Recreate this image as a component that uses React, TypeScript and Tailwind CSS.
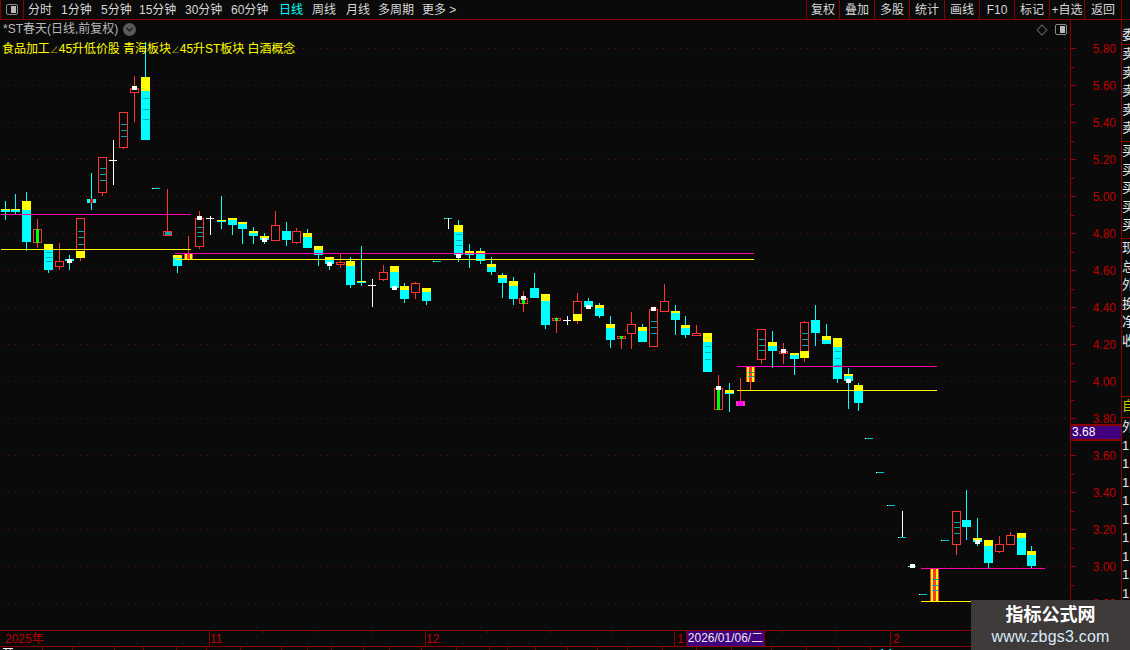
const FONT = "font-['Liberation_Sans','Noto_Sans_CJK_SC',sans-serif]";

type Candle = {
  x: number;
  k: "c" | "r" | "s";
  wt?: number;
  wb?: number;
  t: number;
  b: number;
  yt?: number; // yellow cap height on top
  yb?: number; // yellow foot height on bottom
  ticks?: number[];
  sq?: number; // white square top
  core?: string; // coloured centre bar
  coreT?: number;
};

const candles: Candle[] = [
  { x: 1, k: "c", wt: 201, wb: 220, t: 209, b: 212, yt: 1 },
  { x: 11, k: "c", wt: 194, wb: 214, t: 209, b: 212, yt: 1 },
  { x: 22, k: "c", wt: 192, wb: 251, t: 201, b: 242, yt: 9 },
  { x: 33, k: "r", wt: 219, wb: 248, t: 229, b: 243, core: "#00ff00" },
  { x: 44, k: "c", wb: 273, t: 244, b: 270, yt: 6, ticks: [252, 257, 261] },
  { x: 55, k: "r", wt: 243, wb: 270, t: 261, b: 267 },
  { x: 65, k: "c", wt: 255, wb: 270, t: 259, b: 261, sq: 259 },
  { x: 76, k: "r", wb: 261, t: 218, b: 258, yb: 7, ticks: [231, 237, 244] },
  { x: 87, k: "c", wt: 173, wb: 210, t: 199, b: 203, core: "#ff0000", coreT: 199 },
  { x: 98, k: "r", wb: 196, t: 157, b: 193, ticks: [168, 174, 180] },
  { x: 119, k: "r", wb: 149, t: 112, b: 148, ticks: [124, 130, 136] },
  { x: 130, k: "r", wt: 76, wb: 122, t: 88, b: 93, sq: 86 },
  { x: 141, k: "c", wt: 42, t: 77, b: 140, yt: 14, ticks: [98, 109, 119] },
  { x: 163, k: "r", wt: 189, t: 231, b: 236, ticks: [232, 233, 234] },
  { x: 173, k: "c", wb: 273, t: 255, b: 266, yt: 3 },
  { x: 184, k: "s", wt: 236, t: 254, b: 259 },
  { x: 195, k: "r", wt: 211, wb: 249, t: 218, b: 247, ticks: [227, 232, 236], sq: 216 },
  { x: 217, k: "c", wt: 196, wb: 229, t: 220, b: 222, yt: 1 },
  { x: 228, k: "c", wb: 235, t: 218, b: 225, yt: 2 },
  { x: 238, k: "c", wb: 244, t: 222, b: 229, yt: 2 },
  { x: 249, k: "c", wt: 227, wb: 244, t: 231, b: 236, yt: 2 },
  { x: 260, k: "c", wt: 233, wb: 244, t: 236, b: 240, yt: 2, sq: 238 },
  { x: 271, k: "r", wt: 211, t: 225, b: 241 },
  { x: 282, k: "c", wt: 222, wb: 246, t: 231, b: 240 },
  { x: 292, k: "r", wt: 228, wb: 244, t: 231, b: 243 },
  { x: 303, k: "c", wt: 229, t: 233, b: 248, yt: 4 },
  { x: 314, k: "c", wb: 266, t: 246, b: 255, yt: 4 },
  { x: 325, k: "c", wb: 270, t: 257, b: 264, yt: 3, sq: 262 },
  { x: 336, k: "r", wt: 254, wb: 268, t: 262, b: 265 },
  { x: 346, k: "c", wt: 257, wb: 288, t: 261, b: 285, yt: 5 },
  { x: 357, k: "c", wt: 246, wb: 286, t: 281, b: 283, yt: 1 },
  { x: 379, k: "r", wt: 265, wb: 281, t: 272, b: 280 },
  { x: 390, k: "c", t: 266, b: 288, yt: 6, sq: 286 },
  { x: 400, k: "c", wt: 283, wb: 303, t: 286, b: 299, yt: 4 },
  { x: 411, k: "r", wt: 282, wb: 299, t: 283, b: 293 },
  { x: 422, k: "c", wb: 305, t: 288, b: 301, yt: 4 },
  { x: 454, k: "c", wt: 220, wb: 262, t: 225, b: 255, yt: 7, ticks: [234, 240, 245], sq: 254 },
  { x: 465, k: "c", wt: 244, wb: 268, t: 251, b: 255, yt: 2 },
  { x: 476, k: "c", wt: 248, wb: 264, t: 251, b: 261, yt: 3 },
  { x: 487, k: "c", wt: 257, wb: 275, t: 264, b: 272, yt: 3 },
  { x: 498, k: "c", wt: 273, wb: 298, t: 275, b: 283, yt: 3 },
  { x: 509, k: "c", wt: 277, wb: 305, t: 281, b: 299, yt: 5 },
  { x: 519, k: "r", wt: 291, wb: 312, t: 298, b: 304, core: "#00ff00", coreT: 298, sq: 296 },
  { x: 530, k: "c", wt: 273, wb: 298, t: 288, b: 298 },
  { x: 541, k: "c", wb: 329, t: 294, b: 325, yt: 7 },
  { x: 552, k: "r", wt: 317, wb: 333, t: 318, b: 321, core: "#00ff00" },
  { x: 573, k: "r", wt: 293, wb: 324, t: 301, b: 321, yb: 7 },
  { x: 584, k: "c", wt: 298, wb: 309, t: 301, b: 307, sq: 305 },
  { x: 595, k: "c", wt: 303, wb: 318, t: 305, b: 316, yt: 3 },
  { x: 606, k: "c", wt: 316, wb: 348, t: 324, b: 340, yt: 4 },
  { x: 617, k: "r", wt: 336, wb: 349, t: 336, b: 339, core: "#00ff00" },
  { x: 627, k: "r", wt: 312, wb: 349, t: 324, b: 334 },
  { x: 638, k: "c", wt: 324, wb: 342, t: 327, b: 342, yt: 4 },
  { x: 649, k: "r", t: 309, b: 347, ticks: [321, 327, 333], sq: 307 },
  { x: 660, k: "r", wt: 284, t: 301, b: 312 },
  { x: 671, k: "c", wt: 305, wb: 335, t: 311, b: 320, yt: 2 },
  { x: 681, k: "c", wt: 316, wb: 338, t: 325, b: 335, yt: 3 },
  { x: 692, k: "r", wt: 325, t: 333, b: 336 },
  { x: 703, k: "c", t: 333, b: 372, yt: 9, ticks: [346, 352, 359] },
  { x: 714, k: "r", wt: 375, t: 388, b: 410, core: "#00ff00", sq: 386 },
  { x: 725, k: "c", wt: 383, wb: 412, t: 390, b: 394, yt: 3 },
  { x: 746, k: "s", wb: 390, t: 367, b: 382, ticks: [372, 376] },
  { x: 757, k: "r", wb: 364, t: 329, b: 360, ticks: [339, 345, 350] },
  { x: 768, k: "c", wt: 331, wb: 368, t: 342, b: 351, yt: 4 },
  { x: 779, k: "r", wt: 343, wb: 364, t: 351, b: 354, sq: 349 },
  { x: 790, k: "c", wb: 375, t: 353, b: 359, yt: 2 },
  { x: 800, k: "r", wt: 321, wb: 362, t: 322, b: 358, yb: 7, ticks: [333, 339, 345] },
  { x: 811, k: "c", wt: 305, wb: 346, t: 320, b: 333 },
  { x: 822, k: "c", wt: 324, wb: 344, t: 336, b: 344, yt: 4 },
  { x: 833, k: "c", wb: 383, t: 338, b: 379, yt: 9, ticks: [351, 358, 365] },
  { x: 844, k: "c", wt: 368, wb: 409, t: 374, b: 381, yt: 2, sq: 379 },
  { x: 854, k: "c", wt: 383, wb: 411, t: 385, b: 403, yt: 5 },
  { x: 930, k: "s", t: 569, b: 601, ticks: [579, 585, 590] },
  { x: 952, k: "r", wb: 555, t: 511, b: 545, ticks: [522, 527, 533] },
  { x: 962, k: "c", wt: 490, wb: 540, t: 520, b: 527 },
  { x: 973, k: "c", wt: 518, wb: 546, t: 538, b: 542, yt: 2, sq: 540 },
  { x: 984, k: "c", wb: 568, t: 540, b: 563, yt: 6 },
  { x: 995, k: "r", wt: 536, wb: 553, t: 544, b: 552 },
  { x: 1006, k: "r", wt: 532, t: 535, b: 545 },
  { x: 1017, k: "c", t: 533, b: 555, yt: 5 },
  { x: 1027, k: "c", wt: 546, wb: 568, t: 551, b: 566, yt: 4 },
];

// white crosses: x centre, wick top/bottom, bar y
const crosses = [
  [113, 140, 185, 160],
  [210, 216, 235, 218],
  [372, 279, 307, 285],
  [567, 316, 325, 320],
];

// one-price dashes: left x, y
const dashes = [
  [152, 188], [433, 261], [444, 218], [865, 438], [876, 472], [887, 505],
  [898, 537], [908, 566], [919, 594], [941, 540],
];

const lines = [
  { x1: 1, x2: 191, y: 214, c: "#ff00aa" },
  { x1: 1, x2: 191, y: 249, c: "#ffff00" },
  { x1: 175, x2: 754, y: 253, c: "#ff00aa" },
  { x1: 175, x2: 754, y: 259, c: "#ffff00" },
  { x1: 737, x2: 937, y: 366, c: "#ff00aa" },
  { x1: 737, x2: 937, y: 390, c: "#ffff00" },
  { x1: 921, x2: 1045, y: 568, c: "#ff00aa" },
  { x1: 921, x2: 971, y: 601, c: "#ffff00" },
];

const prices = ["5.80", "5.60", "5.40", "5.20", "5.00", "4.80", "4.60", "4.40", "4.20", "4.00", "3.80", "3.60", "3.40", "3.20", "3.00", "2.80"];
const gridYs = [48, 85, 122, 159, 196, 233, 270, 307, 344, 381, 418, 455, 492, 529, 566, 603];

const navLeft = [
  { t: "分时", w: "w-[33px]" },
  { t: "1分钟", w: "w-[40px]" },
  { t: "5分钟", w: "w-[38px]" },
  { t: "15分钟", w: "w-[46px]" },
  { t: "30分钟", w: "w-[46px]" },
  { t: "60分钟", w: "w-[48px]" },
  { t: "日线", w: "w-[33px]", on: true },
  { t: "周线", w: "w-[34px]" },
  { t: "月线", w: "w-[32px]" },
  { t: "多周期", w: "w-[44px]" },
  { t: "更多 >", w: "w-[46px]" },
];
const navRight = [
  { t: "复权", w: "w-[33px]" },
  { t: "叠加", w: "w-[35px]" },
  { t: "多股", w: "w-[35px]" },
  { t: "统计", w: "w-[35px]" },
  { t: "画线", w: "w-[35px]" },
  { t: "F10", w: "w-[35px]" },
  { t: "标记", w: "w-[35px]" },
  { t: "+自选", w: "w-[35px]" },
  { t: "返回", w: "w-[37px]" },
];

// cells of the table row cut off by the window bottom: width, text, colour
const bottomCells = [
  { w: 43, t: "开" }, { w: 30, t: "" }, { w: 42, t: "" }, { w: 29, t: "" }, { w: 33, t: "" }, { w: 30, t: "" },
  { w: 34, t: "" }, { w: 41, t: "" }, { w: 26, t: "" }, { w: 24, t: "" }, { w: 32, t: "" }, { w: 26, t: "" },
  { w: 32, t: "" }, { w: 35, t: "" }, { w: 33, t: "" }, { w: 18, t: "" }, { w: 28, t: "" }, { w: 32, t: "" },
  { w: 30, t: "" }, { w: 30, t: "" }, { w: 35, t: "" }, { w: 34, t: "" }, { w: 35, t: "" }, { w: 40, t: "" },
  { w: 35, t: "" }, { w: 32, t: "" }, { w: 32, t: "" },
];

const axisMarks = [
  { x: "left-[209px]", big: true },
  { x: "left-[263px]" },
  { x: "left-[317px]" },
  { x: "left-[371px]" },
  { x: "left-[425px]", big: true },
  { x: "left-[487px]" },
  { x: "left-[550px]" },
  { x: "left-[612px]" },
  { x: "left-[674px]", big: true },
  { x: "left-[782px]" },
  { x: "left-[836px]" },
  { x: "left-[890px]", big: true },
];

function CandleMark({ c }: { c: Candle }) {
  const mid = c.x + 4;
  const red = "#ff3333";
  const wick = c.k === "c" ? "#00ffff" : red;
  const h = c.b - c.t;
  return (
    <g>
      {c.wt !== undefined && <rect x={mid} y={c.wt} width={1} height={Math.max(c.t - c.wt, 0)} fill={wick} />}
      {c.wb !== undefined && <rect x={mid} y={c.b} width={1} height={Math.max(c.wb - c.b, 0)} fill={wick} />}
      {c.k === "c" && <rect x={c.x} y={c.t} width={9} height={h} fill="#00ffff" />}
      {c.k === "c" && c.yt && <rect x={c.x} y={c.t} width={9} height={c.yt} fill="#ffff00" />}
      {c.k === "r" && <rect x={c.x + 0.5} y={c.t + 0.5} width={8} height={h - 1} fill="#0a0a0a" stroke={red} />}
      {c.k === "r" && c.yb && <rect x={c.x} y={c.b - c.yb} width={9} height={c.yb} fill="#ffff00" />}
      {c.k === "s" && (
        <>
          <rect x={c.x} y={c.t} width={9} height={h} fill={red} />
          <rect x={c.x + 1} y={c.t} width={2} height={h} fill="#ffff00" />
          <rect x={c.x + 6} y={c.t} width={2} height={h} fill="#ffff00" />
        </>
      )}
      {c.core && <rect x={c.x + 3} y={c.coreT ?? c.t} width={3} height={c.b - (c.coreT ?? c.t)} fill={c.core} />}
      {c.ticks?.map((y) => <rect key={y} x={c.x + 2} y={y} width={6} height={1} fill="#00a8a8" />)}
      {c.sq !== undefined && <rect x={c.x + 2} y={c.sq} width={5} height={4} fill="#ffffff" />}
    </g>
  );
}

function PriceChart() {
  return (
    <svg className="block h-full w-full" viewBox="0 20 1070 610" shapeRendering="crispEdges">
      {gridYs.map((y) => (
        <line key={y} x1={2} x2={1067} y1={y + 0.5} y2={y + 0.5} stroke="#6a0c0c" strokeDasharray="1 5" />
      ))}
      {candles.map((c, i) => <CandleMark key={i} c={c} />)}
      {crosses.map(([x, a, b, y]) => (
        <g key={x} fill="#ffffff">
          <rect x={x} y={a} width={1} height={b - a} />
          <rect x={x - 4} y={y} width={8} height={1} />
        </g>
      ))}
      {dashes.map(([x, y]) => (
        <g key={x}>
          <rect x={x} y={y} width={8} height={1} fill="#00c8c8" />
          <rect x={x} y={y} width={1} height={1} fill="#ffffff" />
        </g>
      ))}
      <rect x={448} y={218} width={1} height={11} fill="#ffffff" />
      <rect x={902} y={511} width={1} height={26} fill="#ffffff" />
      <rect x={910} y={564} width={5} height={4} fill="#ffffff" />
      <g>
        <rect x={740} y={378} width={1} height={23} fill="#ff3333" />
        <rect x={736} y={401} width={9} height={5} fill="#ff33aa" />
        <rect x={738} y={401} width={5} height={5} fill="#ff00ff" />
      </g>
      {lines.map((l) => (
        <rect key={l.x1 + "-" + l.y} x={l.x1} y={l.y} width={l.x2 - l.x1} height={1} fill={l.c} />
      ))}
    </svg>
  );
}

function AxisTicks() {
  return (
    <svg className="absolute left-0 top-0 h-full w-[6px]" viewBox="0 20 6 610" shapeRendering="crispEdges">
      {gridYs.map((y) => (
        <g key={y} fill="#a00000">
          <rect x={0} y={y} width={5} height={1} />
          <rect x={0} y={y + 19} width={3} height={1} />
        </g>
      ))}
    </svg>
  );
}

const stripRows = [
  { h: "h-[25px] pt-[6px]", rows: ["委"] },
  { h: "h-[97px]", rows: ["卖", "卖", "卖", "卖", "卖"] },
  { h: "h-[97px]", rows: ["买", "买", "买", "买", "买"] },
  { h: "h-[158px]", rows: ["现", "总", "外", "换", "净", "收"] },
];

function SideStrip() {
  return (
    <div className="flex w-[9px] flex-col overflow-hidden border-l border-[#8a0000] text-[13px] leading-[18.5px] text-[#e8e8e8]">
      {stripRows.map((s, i) => (
        <div key={i} className={`${s.h} shrink-0 overflow-hidden border-b border-[#8a0000]`}>
          {s.rows.map((r, j) => <div key={j} className="whitespace-nowrap">{r}</div>)}
        </div>
      ))}
      <div className="h-[21px] shrink-0 border-b border-[#8a0000] text-[#c8c800]">自</div>
      <div className="whitespace-nowrap">外</div>
      {Array.from({ length: 10 }).map((_, i) => <div key={i}>1</div>)}
    </div>
  );
}

function Toggle() {
  return (
    <span className="flex h-[11px] w-[12px] items-center justify-end rounded-[2px] border border-[#8a8a8a] p-px">
      <span className="h-full w-[5px] bg-[#b8b8b8]" />
    </span>
  );
}

export default function App() {
  return (
    <div className={`relative flex h-[650px] w-[1130px] flex-col overflow-hidden bg-[#0a0a0a] ${FONT}`}>
      <div className="flex h-[20px] shrink-0 items-center border-b border-[#8a0000] text-[12px] text-[#d8d8d8]">
        <div className="flex h-full w-[24px] items-center justify-center border-x border-[#8a0000]">
          <Toggle />
        </div>
        <div className="flex pl-[4px]">
          {navLeft.map((n) => (
            <span key={n.t} className={`${n.w} whitespace-nowrap ${n.on ? "text-[#00ffff]" : ""}`}>{n.t}</span>
          ))}
        </div>
        <div className="ml-auto flex h-full">
          {navRight.map((n) => (
            <span key={n.t} className={`${n.w} flex h-full items-center justify-center whitespace-nowrap border-l border-[#8a0000]`}>{n.t}</span>
          ))}
          <span className="h-full w-[9px] border-l border-[#8a0000]" />
        </div>
      </div>

      <div className="flex h-[610px] shrink-0">
        <div className="relative w-[1070px] shrink-0">
          <PriceChart />
          <div className="absolute left-[3px] top-[2px] flex items-center gap-[5px] text-[12px] leading-[14px] text-[#b8b8b8]">
            <span>*ST春天(日线,前复权)</span>
            <span className="flex h-[13px] w-[13px] items-center justify-center rounded-full bg-[#5a5a5a]">
              <svg width="7" height="5" viewBox="0 0 7 5" fill="none" stroke="#151515" strokeWidth="1.2">
                <path d="M0.5 0.8 L3.5 3.8 L6.5 0.8" />
              </svg>
            </span>
          </div>
          <div className="absolute left-[2px] top-[22px] whitespace-nowrap text-[12px] leading-[14px] tracking-[-0.05px] text-[#ffff00]">
            食品加工<span className="text-[9px] text-[#b0b000]">∠</span>45升低价股 青海板块<span className="text-[9px] text-[#b0b000]">∠</span>45升ST板块 白酒概念
          </div>
          <div className="absolute right-[3px] top-[4px] flex items-center gap-[9px]">
            <span className="h-[8px] w-[8px] rotate-45 border border-[#666]" />
            <Toggle />
          </div>
        </div>
        <div className="relative w-[51px] shrink-0 border-l border-[#8a0000] pt-[10px] text-[#c00000]">
          <AxisTicks />
          {prices.map((p) => (
            <div key={p} className="flex h-[37px] items-center justify-end pr-[5px] text-[12px]">{p}</div>
          ))}
          <div className="absolute left-0 right-0 top-[404px] h-[17px] border-y-2 border-[#8a0000] bg-[#400080] pl-[1px] text-[12px] leading-[13px] text-white">
            3.68
          </div>
        </div>
        <SideStrip />
      </div>

      <div className="relative h-[17px] shrink-0 border-y border-[#8a0000] text-[12px] leading-[16px] text-[#c00000]">
        {axisMarks.map((m) => (
          <span key={m.x} className={`absolute top-0 w-px bg-[#8a0000] ${m.x} ${m.big ? "h-full" : "h-[2px]"}`} />
        ))}
        <span className="absolute left-[5px] top-0">2025年</span>
        <span className="absolute left-[210px] top-0">11</span>
        <span className="absolute left-[426px] top-0">12</span>
        <span className="absolute left-[677px] top-0">1</span>
        <span className="absolute left-[893px] top-0">2</span>
        <span className="absolute left-[686px] top-0 h-full w-[79px] border-x border-[#8a0000] bg-[#400080] text-center leading-[15px] text-[#e8e8e8]">2026/01/06/二</span>
      </div>
      <div className="flex h-[3px] shrink-0 overflow-hidden text-[12px] leading-[14px] text-white">
        {bottomCells.map((c, i) => (
          <span key={i} className="shrink-0 border-r border-[#8a0000] pl-[2px]" style={{ width: c.w }}>{c.t}</span>
        ))}
        <span className="w-[20px] shrink-0 pl-[8px] text-[#00ffff]">14</span>
      </div>

      <div className="absolute bottom-0 right-0 flex h-[50px] w-[159px] flex-col items-center justify-center bg-[#3e3a39] text-white">
        <span className="text-[18px] font-bold leading-[24px]">指标公式网</span>
        <span className="text-[16px] leading-[20px] tracking-[0.2px] text-[#d8eaf8]">www.zbgs3.com</span>
      </div>
    </div>
  );
}
